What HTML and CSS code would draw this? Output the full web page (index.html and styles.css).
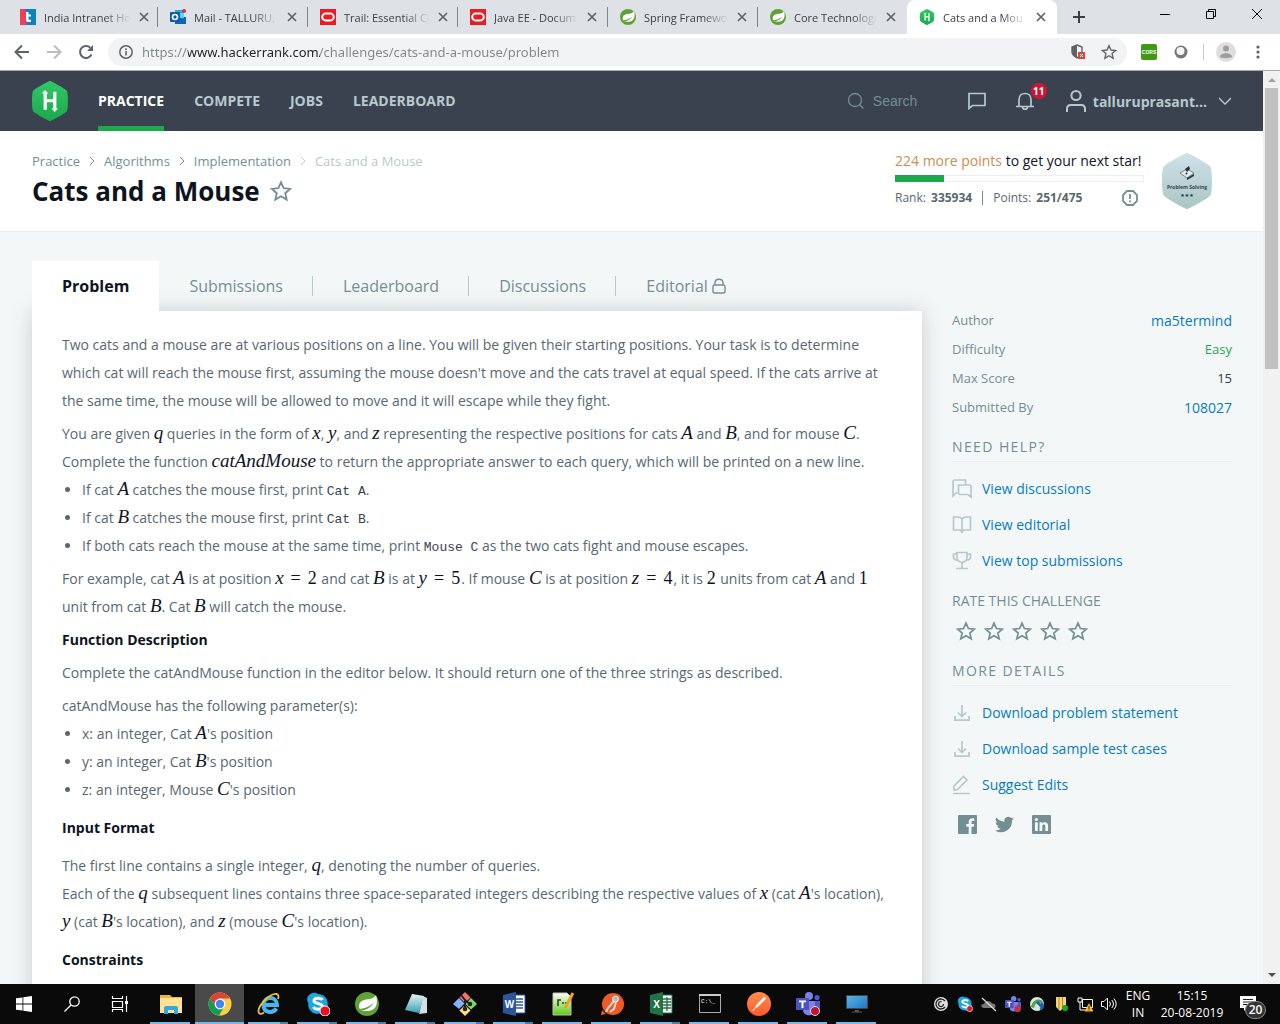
FILE: index.html
```html
<!DOCTYPE html>
<html lang="en">
<head>
<meta charset="utf-8">
<title>Cats and a Mouse | HackerRank</title>
<link rel="stylesheet" href="styles.css">
</head>
<body>
<svg class="sprites" aria-hidden="true">
  <defs>
    <linearGradient id="hexGreen" x1="0" y1="0" x2="0" y2="1"><stop offset="0" stop-color="#32c766"/><stop offset="1" stop-color="#1ba94c"/></linearGradient>
    <linearGradient id="badgeFill" x1="0" y1="0" x2="0" y2="1"><stop offset="0" stop-color="#cfe1ea"/><stop offset="1" stop-color="#a9c6c4"/></linearGradient>
    <linearGradient id="postmanFill" x1="0" y1="0" x2="0" y2="1"><stop offset="0" stop-color="#ff8d4e"/><stop offset="1" stop-color="#ff5a2b"/></linearGradient>
    <linearGradient id="screenFill" x1="0" y1="0" x2="1" y2="1"><stop offset="0" stop-color="#5db4ea"/><stop offset="1" stop-color="#1f78bd"/></linearGradient>
    <linearGradient id="noteFill" x1="0" y1="0" x2="0" y2="1"><stop offset="0" stop-color="#e6f3f5"/><stop offset="1" stop-color="#3c9fb4"/></linearGradient>
    <linearGradient id="nppFill" x1="0" y1="0" x2="0" y2="1"><stop offset="0" stop-color="#fdfff4"/><stop offset="1" stop-color="#5ecb12"/></linearGradient>
    <symbol id="close" viewBox="0 0 10 10"><path d="M1 1l8 8M9 1l-8 8" fill="none" stroke="#5f6368" stroke-width="1.7"/></symbol>
    <symbol id="oracle" viewBox="0 0 16 16"><path fill="#ea1b22" d="M0 0h16v16H0z"/><rect x="2.200" y="4.600" width="11.600" height="6.800" rx="3.400" fill="none" stroke="#fff" stroke-width="2"/></symbol>
    <symbol id="spring" viewBox="0 0 24 24"><circle cx="12" cy="12" r="12" fill="#5fa134"/><path fill="#fff" d="M21 3c1.800 7 1 12-3 14.500-4 2.400-8.500 1.300-12.500 1.300 6-.6 10.500-3.200 13-8C15 14.500 10.500 16.400 4.700 17 2.700 12 5.500 8.500 11 7.600 15.500 7 19 6.500 21 3z"/></symbol>
    <symbol id="hr" viewBox="0 0 36 40"><path fill="url(#hexGreen)" d="M18 0c1.500 0 15.500 8 16.700 9.500 1.600 2 1.600 19 0 21C33.500 32 19.500 40 18 40S2.500 32 1.300 30.500c-1.700-2-1.700-19 0-21C2.500 8 16.500 0 18 0z"/><path fill="#fff" d="M13 9l3.400 3.600h-1.600v5.600h6.400v-7.500h3.200v16.800H26L22.800 31l-3.400-3.500h1.800v-6.300h-6.400v7.500h-3.200V12.600H9.700z"/></symbol>
    <symbol id="star" viewBox="0 0 24 24"><path fill="none" stroke="currentColor" stroke-width="2" d="M12 2.500l2.900 6.500 7.100.7-5.400 4.700 1.600 7-6.200-3.700-6.200 3.700 1.600-7L2 9.700 9.100 9z"/></symbol>
    <symbol id="download" viewBox="0 0 20 20"><path fill="none" stroke="currentColor" stroke-width="1.700" d="M10 2v11M6 9.500l4 4 4-4M3 13v4.200h14V13"/></symbol>
    <symbol id="skype" viewBox="0 0 24 24"><path fill="#1ba7e6" d="M7 1c2-.4 3.500.2 5 1 6 0 10.500 5 9.500 10.500C24 17 20 23.500 14 21.600 7 22.500 1.500 18 2.400 11.500-.5 7 2 2 7 1z"/><path fill="none" stroke="#fff" stroke-width="3" d="M16.500 8C15 5.500 8 5.400 8 8.800c0 3.700 8.500 2 8.500 5.800 0 3.500-7.500 3.300-9 .2"/></symbol>
    <symbol id="teams" viewBox="0 0 24 24"><circle cx="13" cy="4" r="4" fill="#7b83eb"/><circle cx="21" cy="5.500" r="2.600" fill="#5059c9"/><path fill="#5059c9" d="M16 9h8v8c0 3-4 4.500-8 2z"/><path fill="#7b83eb" d="M7 9h12v9c0 7-12 7-12 0z"/><rect y="6" width="13" height="12" rx="1" fill="#4b53bc"/><path fill="#fff" d="M3 8.500h7v1.800H7.500V16h-2v-5.700H3z"/></symbol>
  </defs>
</svg>

<header class="browser">
  <nav class="tabstrip" aria-label="Browser tabs">
    <div class="tab"><svg class="fav" viewBox="0 0 16 16"><path fill="#ef3e5b" d="M0 0h8v16H0z"/><path fill="#0d83bd" d="M5 0h11v16H6l2-8z"/><path fill="#fff" d="M6 3h2.500v2.500H11v2H8.500V10c0 1 1 1 2.500.7v2c-3 .9-5 .2-5-2.200z"/></svg><span class="tab-title">India Intranet Ho</span><button class="tab-close" aria-label="Close tab"><svg><use href="#close"/></svg></button></div>
    <div class="tab"><svg class="fav" viewBox="0 0 16 16"><path fill="#28a8ea" d="M5 1h9v9H5z"/><path fill="#1066b5" d="M5 8l11 0v7H5z"/><path fill="#50d9ff" d="M9 4h5v5H9z"/><rect y="3" width="10" height="10" rx="1" fill="#0a5caa"/><circle cx="5" cy="8" r="2.500" fill="none" stroke="#fff" stroke-width="1.600"/><circle cx="14" cy="2" r="2" fill="#e52b3c"/></svg><span class="tab-title">Mail - TALLURU,</span><button class="tab-close" aria-label="Close tab"><svg><use href="#close"/></svg></button></div>
    <div class="tab"><svg class="fav"><use href="#oracle"/></svg><span class="tab-title">Trail: Essential Cl</span><button class="tab-close" aria-label="Close tab"><svg><use href="#close"/></svg></button></div>
    <div class="tab"><svg class="fav"><use href="#oracle"/></svg><span class="tab-title">Java EE - Docum</span><button class="tab-close" aria-label="Close tab"><svg><use href="#close"/></svg></button></div>
    <div class="tab"><svg class="fav"><use href="#spring"/></svg><span class="tab-title">Spring Framewo</span><button class="tab-close" aria-label="Close tab"><svg><use href="#close"/></svg></button></div>
    <div class="tab last"><svg class="fav"><use href="#spring"/></svg><span class="tab-title">Core Technologi</span><button class="tab-close" aria-label="Close tab"><svg><use href="#close"/></svg></button></div>
    <div class="tab active"><svg class="fav"><use href="#hr"/></svg><span class="tab-title">Cats and a Mou</span><button class="tab-close" aria-label="Close tab"><svg><use href="#close"/></svg></button></div>
    <button class="new-tab" aria-label="New tab"><svg width="12" height="12" viewBox="0 0 12 12"><path d="M6 0v12M0 6h12" stroke="#3c4043" stroke-width="2"/></svg></button>
    <div class="window-controls">
      <button aria-label="Minimize"><svg width="10" height="10" viewBox="0 0 10 10"><path d="M0 5.500h10" stroke="#000"/></svg></button>
      <button aria-label="Restore"><svg width="10" height="10" viewBox="0 0 10 10"><path d="M.5 2.500h7v7h-7zM2.500 2V.5h7v7H8" fill="none" stroke="#000"/></svg></button>
      <button aria-label="Close window"><svg width="10" height="10" viewBox="0 0 10 10"><path d="M0 0l10 10M10 0L0 10" stroke="#000"/></svg></button>
    </div>
  </nav>
  <div class="toolbar">
    <button class="nav-btn" aria-label="Back"><svg width="16" height="16" viewBox="0 0 16 16"><path d="M15 8H2M8 1.500L1.500 8 8 14.500" fill="none" stroke="#5f6368" stroke-width="2"/></svg></button>
    <button class="nav-btn" aria-label="Forward"><svg width="16" height="16" viewBox="0 0 16 16"><path d="M1 8h13M8 1.500L14.500 8 8 14.500" fill="none" stroke="#babcbe" stroke-width="2"/></svg></button>
    <button class="nav-btn" aria-label="Reload"><svg width="16" height="16" viewBox="0 0 16 16"><path d="M13.500 10.500A6 6 0 1 1 12.300 3.700" fill="none" stroke="#5f6368" stroke-width="2"/><path fill="#5f6368" d="M15 1v6H9z"/></svg></button>
    <div class="omnibox">
      <svg width="14" height="14" viewBox="0 0 14 14"><circle cx="7" cy="7" r="6.200" fill="none" stroke="#5f6368" stroke-width="1.500"/><path d="M7 6v4.500M7 3.300v1.600" stroke="#5f6368" stroke-width="1.500"/></svg>
      <input class="url" type="text" aria-label="Address" value="https://www.hackerrank.com/challenges/cats-and-a-mouse/problem">
      <button class="omni-btn" aria-label="Site permissions"><svg width="14" height="16" viewBox="0 0 14 16"><path fill="none" stroke="#5f6368" stroke-width="1.400" d="M6 1l5 2v5c0 3-2 4-5 6-3-2-5-3-5-6V3z"/><path fill="#5f6368" d="M6 1v13C3 12 1 11 1 8V3z"/><path fill="#db4437" d="M7 8h7v7H7z"/><path d="M9 10l3 3m0-3l-3 3" stroke="#fff"/></svg></button>
      <button class="omni-btn" aria-label="Bookmark"><svg class="star-16"><use href="#star"/></svg></button>
    </div>
    <div class="extensions">
      <button aria-label="CORS"><svg width="16" height="16" viewBox="0 0 16 16"><rect width="16" height="16" rx="2" fill="#3f9a12"/><text x="8" y="10" class="cors">CORS</text></svg></button>
      <button aria-label="Extension"><svg width="14" height="14" viewBox="0 0 14 14"><circle cx="7" cy="7" r="6.500" fill="#777"/><circle cx="6.500" cy="6" r="4" fill="#f4f4f4"/></svg></button>
      <span class="ext-divider"></span>
      <button aria-label="Profile"><svg width="20" height="20" viewBox="0 0 20 20"><circle cx="10" cy="10" r="10" fill="#dedede"/><circle cx="10" cy="6.500" r="3" fill="#9e9e9e"/><path fill="#9e9e9e" d="M4 15c0-5 12-5 12 0-1.500 1.500-10.500 1.500-12 0z"/></svg></button>
      <button aria-label="Menu"><svg width="4" height="14" viewBox="0 0 4 14"><g fill="#5f6368"><circle cx="2" cy="2" r="1.600"/><circle cx="2" cy="7" r="1.600"/><circle cx="2" cy="12" r="1.600"/></g></svg></button>
    </div>
  </div>
</header>

<div class="viewport">
<div class="page">
  <header class="topnav">
    <a class="logo" href="#" aria-label="HackerRank"><svg width="36" height="40"><use href="#hr"/></svg></a>
    <nav class="mainmenu">
      <a class="current" href="#">PRACTICE</a>
      <a href="#">COMPETE</a>
      <a href="#">JOBS</a>
      <a href="#">LEADERBOARD</a>
    </nav>
    <div class="search">
      <svg width="18" height="18" viewBox="0 0 18 18"><circle cx="8" cy="8" r="6.500" fill="none" stroke="#738f93" stroke-width="1.300"/><path d="M12.700 12.700L16.500 16.500" stroke="#738f93" stroke-width="1.300"/></svg>
      <input type="text" placeholder="Search" aria-label="Search">
    </div>
    <button class="icon-btn" aria-label="Messages"><svg width="20" height="20" viewBox="0 0 20 20"><path d="M2 2.500h16v12H5.500L2 17.500z" fill="none" stroke="#b7c9cc" stroke-width="1.700"/></svg></button>
    <button class="icon-btn" aria-label="Notifications"><svg width="20" height="20" viewBox="0 0 20 20"><path d="M1 15.500h18M4 15V8.500c0-8 12-8 12 0V15M7.500 16c.5 3 4.500 3 5 0" fill="none" stroke="#b7c9cc" stroke-width="1.700"/></svg><span class="count">11</span></button>
    <button class="user"><svg width="22" height="24" viewBox="0 0 22 24"><circle cx="11" cy="6.500" r="4.600" fill="none" stroke="#b7c9cc" stroke-width="2"/><path d="M2 23v-3c0-2.500 1.500-4 4-4h10c2.500 0 4 1.500 4 4v3" fill="none" stroke="#b7c9cc" stroke-width="2"/></svg><span>talluruprasant...</span><svg width="12" height="8" viewBox="0 0 12 8"><path d="M0 1l6 6 6-6" fill="none" stroke="#b7c9cc" stroke-width="1.300"/></svg></button>
  </header>

  <section class="titlebar">
    <div class="heading">
      <nav class="crumbs" aria-label="Breadcrumb">
        <a href="#">Practice</a><svg width="6" height="10" viewBox="0 0 6 10"><path d="M1 1l4 4-4 4" fill="none" stroke="#738f93"/></svg>
        <a href="#">Algorithms</a><svg width="6" height="10" viewBox="0 0 6 10"><path d="M1 1l4 4-4 4" fill="none" stroke="#738f93"/></svg>
        <a href="#">Implementation</a><svg width="6" height="10" viewBox="0 0 6 10"><path d="M1 1l4 4-4 4" fill="none" stroke="#c2d0d2"/></svg>
        <span>Cats and a Mouse</span>
      </nav>
      <div class="title-row"><h1>Cats and a Mouse</h1><button class="fav-star" aria-label="Bookmark challenge"><svg width="22" height="22"><use href="#star"/></svg></button></div>
    </div>
    <div class="progress">
      <p class="next"><span>224 more points</span> to get your next star!</p>
      <div class="bar"><div class="fill" style="width:20%"></div></div>
      <div class="rank"><span>Rank: <b>335934</b></span><i></i><span>Points: <b>251/475</b></span><svg width="16" height="16" viewBox="0 0 16 16"><path d="M5 1h6l4 4v6l-4 4H5l-4-4V5z" fill="none" stroke="#738f93" stroke-width="1.800"/><path d="M8 4v5M8 10.500v1.700" stroke="#738f93" stroke-width="1.800"/></svg></div>
    </div>
    <svg class="badge" width="50" height="56" viewBox="0 0 50 56"><path fill="url(#badgeFill)" d="M25 0c2 0 21.500 11 23.300 13.500 2.200 3 2.200 26 0 29C46.500 45 27 56 25 56S3.500 45 1.700 42.500c-2.300-3-2.300-26 0-29C3.500 11 23 0 25 0z"/><path fill="#e3eced" stroke="#39424e" stroke-width=".6" d="M18 20l7-4 7 4-7 5z"/><path fill="#2a333d" d="M25 25l7-4v2l-7 4zM23 16l4-3 1 3-3 3z"/><circle cx="24.500" cy="20.500" r="1" fill="#2a333d"/><text x="25" y="36" class="badge-text">Problem Solving</text><text x="25" y="44" class="badge-stars">★★★</text></svg>
  </section>

  <main class="content">
    <div class="challenge">
      <nav class="subtabs">
        <a class="on" href="#">Problem</a>
        <a href="#">Submissions</a>
        <a href="#">Leaderboard</a>
        <a href="#">Discussions</a>
        <a href="#">Editorial <svg width="14" height="16" viewBox="0 0 14 16"><rect x="1" y="7" width="12" height="8" rx="1.500" fill="none" stroke="#738f93" stroke-width="1.400"/><path d="M3 7V5c0-5 8-5 8 0v2" fill="none" stroke="#738f93" stroke-width="1.400"/></svg></a>
      </nav>
      <article class="statement">
        <p>Two cats and a mouse are at various positions on a line. You will be given their starting positions. Your task is to determine which cat will reach the mouse first, assuming the mouse doesn't move and the cats travel at equal speed. If the cats arrive at the same time, the mouse will be allowed to move and it will escape while they fight.</p>
        <p>You are given <var>q</var> queries in the form of <var>x</var>, <var>y</var>, and <var>z</var> representing the respective positions for cats <var>A</var> and <var>B</var>, and for mouse <var>C</var>. Complete the function <var>catAndMouse</var> to return the appropriate answer to each query, which will be printed on a new line.</p>
        <ul>
          <li>If cat <var>A</var> catches the mouse first, print <code>Cat A</code>.</li>
          <li>If cat <var>B</var> catches the mouse first, print <code>Cat B</code>.</li>
          <li>If both cats reach the mouse at the same time, print <code>Mouse C</code> as the two cats fight and mouse escapes.</li>
        </ul>
        <p>For example, cat <var>A</var> is at position <span class="eq"><var>x</var><i>=</i>2</span> and cat <var>B</var> is at <span class="eq"><var>y</var><i>=</i>5</span>. If mouse <var>C</var> is at position <span class="eq"><var>z</var><i>=</i>4</span>, it is <span class="eq">2</span> units from cat <var>A</var> and <span class="eq">1</span> unit from cat <var>B</var>. Cat <var>B</var> will catch the mouse.</p>
        <h2>Function Description</h2>
        <p>Complete the catAndMouse function in the editor below. It should return one of the three strings as described.</p>
        <p>catAndMouse has the following parameter(s):</p>
        <ul>
          <li>x: an integer, Cat <var>A</var>'s position</li>
          <li>y: an integer, Cat <var>B</var>'s position</li>
          <li>z: an integer, Mouse <var>C</var>'s position</li>
        </ul>
        <h2 class="spaced">Input Format</h2>
        <p>The first line contains a single integer, <var>q</var>, denoting the number of queries.<br>Each of the <var>q</var> subsequent lines contains three space-separated integers describing the respective values of <var>x</var> (cat <var>A</var>'s location), <var>y</var> (cat <var>B</var>'s location), and <var>z</var> (mouse <var>C</var>'s location).</p>
        <h2 class="spaced">Constraints</h2>
      </article>
    </div>

    <aside class="side">
      <dl class="facts">
        <dt>Author</dt><dd><a href="#">ma5termind</a></dd>
        <dt>Difficulty</dt><dd class="small easy">Easy</dd>
        <dt>Max Score</dt><dd class="small">15</dd>
        <dt>Submitted By</dt><dd><a href="#">108027</a></dd>
      </dl>
      <h3 class="ruled">NEED HELP?</h3>
      <ul class="links">
        <li><a href="#"><svg viewBox="0 0 20 20"><path d="M5.500 14H4l-3 3V2.500C1 1.500 1.500 1 2.500 1h11v4.500M6.500 6H18c.6 0 1 .4 1 1v11l-3-2.500H8c-.9 0-1.500-.6-1.500-1.500z" fill="none" stroke="currentColor" stroke-width="1.700"/></svg>View discussions</a></li>
        <li><a href="#"><svg viewBox="0 0 20 20"><path d="M10 18V4c-1-1.300-2-2-4-2H1.500v13H7c1.500 0 3 1 3 3 0-2 1.500-3 3-3h5.500V2H14c-2 0-3 .7-4 2" fill="none" stroke="currentColor" stroke-width="1.700"/></svg>View editorial</a></li>
        <li><a href="#"><svg viewBox="0 0 20 20"><path d="M5 1.500h10V6c0 7-10 7-10 0zM5 3H1.500v3c0 2 1.500 3 4 3.200M15 3h3.500v3c0 2-1.500 3-4 3.200M10 11.500V17M4 17.500h12" fill="none" stroke="currentColor" stroke-width="1.700"/></svg>View top submissions</a></li>
      </ul>
      <h3>RATE THIS CHALLENGE</h3>
      <div class="rating">
        <button aria-label="1 star"><svg><use href="#star"/></svg></button>
        <button aria-label="2 stars"><svg><use href="#star"/></svg></button>
        <button aria-label="3 stars"><svg><use href="#star"/></svg></button>
        <button aria-label="4 stars"><svg><use href="#star"/></svg></button>
        <button aria-label="5 stars"><svg><use href="#star"/></svg></button>
      </div>
      <h3 class="ruled">MORE DETAILS</h3>
      <ul class="links">
        <li><a href="#"><svg><use href="#download"/></svg>Download problem statement</a></li>
        <li><a href="#"><svg><use href="#download"/></svg>Download sample test cases</a></li>
        <li><a href="#"><svg viewBox="0 0 20 20"><path d="M2 15v-4L11.500 1.500l3.500 3.500L5.500 14.500zM1 18.500h17" fill="none" stroke="currentColor" stroke-width="1.700"/></svg>Suggest Edits</a></li>
      </ul>
      <div class="social">
        <a href="#" aria-label="Facebook"><svg width="19" height="19" viewBox="0 0 19 19"><path fill="#738f93" fill-rule="evenodd" d="M1 0h17q1 0 1 1v17q0 1-1 1h-4.500v-7.200h2.300l.4-2.800h-2.700V7.300c0-.8.3-1.300 1.300-1.300h1.500V3.400c-3.500-.5-5.600.5-5.600 3.600v2H8.300v2.800h2.400V19H1q-1 0-1-1V1q0-1 1-1z"/></svg></a>
        <a href="#" aria-label="Twitter"><svg width="19" height="19" viewBox="0 0 24 24"><path fill="#738f93" d="M24 4.600a10 10 0 0 1-2.800.8 5 5 0 0 0 2.200-2.700 10 10 0 0 1-3.100 1.200 4.900 4.900 0 0 0-8.400 4.500A14 14 0 0 1 1.700 3.200a4.900 4.900 0 0 0 1.500 6.500 5 5 0 0 1-2.200-.6 4.900 4.900 0 0 0 3.900 4.900 5 5 0 0 1-2.200.1 4.900 4.900 0 0 0 4.600 3.400A10 10 0 0 1 0 19.500 14 14 0 0 0 21.500 7.100 10 10 0 0 0 24 4.600z"/></svg></a>
        <a href="#" aria-label="LinkedIn"><svg width="19" height="19" viewBox="0 0 19 19"><rect width="19" height="19" rx="1" fill="#738f93"/><path fill="#f3f7f7" d="M3 7.300h2.800V16H3zM7.500 7.300h2.600v1.200c1.600-2.300 6-1.800 6 2.200V16h-2.800v-4.700c0-2.400-3-2.300-3 0V16H7.500z"/><circle cx="4.400" cy="4.500" r="1.600" fill="#f3f7f7"/></svg></a>
      </div>
    </aside>
  </main>
</div>
<div class="scrollbar">
  <svg width="8" height="4" viewBox="0 0 8 4"><path fill="#a3a3a3" d="M0 4l4-4 4 4z"/></svg>
  <div class="track"><div class="thumb"></div></div>
  <svg width="8" height="4" viewBox="0 0 8 4"><path fill="#505050" d="M0 0l4 4 4-4z"/></svg>
</div>
</div>

<footer class="taskbar">
  <div class="system">
    <button aria-label="Start"><svg width="16" height="16" viewBox="0 0 16 16"><path fill="#fff" d="M0 2.300l6.500-.9v6.200H0zM7.300 1.300L16 0v7.600H7.300zM0 8.400h6.500v6.200L0 13.700zM7.300 8.400H16V16l-8.700-1.300z"/></svg></button>
    <button aria-label="Search"><svg width="16" height="16" viewBox="0 0 16 16"><circle cx="10.500" cy="5.500" r="4.700" fill="none" stroke="#fff" stroke-width="1.300"/><path d="M7 9L.5 15.500" stroke="#fff" stroke-width="1.300"/></svg></button>
    <button aria-label="Task View"><svg width="18" height="16" viewBox="0 0 18 16"><path d="M1.500 0v2.500h10V0M1.500 5.500h10v6h-10zM1.500 16v-2.500h10V16M15.500 0v16" fill="none" stroke="#fff" stroke-width="1.200"/><path fill="#fff" d="M14 5h3v3h-3z"/></svg></button>
  </div>
  <div class="apps">
    <button class="running" aria-label="File Explorer"><svg viewBox="0 0 24 24"><path fill="#e8b53f" d="M1 3h10l2 2h10v6H1z"/><path fill="#ffe392" d="M1 6h22v15H1z"/><path fill="#35a7e0" d="M5 22v-6q0-2 2-2h10q2 0 2 2v6h-4v-4H9v4z"/></svg></button>
    <button class="running focused" aria-label="Chrome"><svg viewBox="0 0 24 24"><circle cx="12" cy="12" r="11.500" fill="#ffcd46"/><path fill="#db4437" d="M2 6.200A11.500 11.500 0 0 1 22 6.500H12L7 15z"/><path fill="#0f9d58" d="M2 6.200A11.500 11.500 0 0 0 11 23.500l5.500-9.300L7.500 15z"/><circle cx="12" cy="12" r="5.400" fill="#fff"/><circle cx="12" cy="12" r="4.200" fill="#4285f4"/></svg></button>
    <button class="running stacked" aria-label="Internet Explorer"><svg viewBox="0 0 24 24"><path fill="none" stroke="#45b6ee" stroke-width="4" d="M6 13h14c0-9-13-9.500-13.500 0 0 8 9 9 13 3.500"/><path fill="none" stroke="#f4c12c" stroke-width="1.800" d="M21 7c2-6-3-6.500-9-2.500C4 10 0 18 2 21c1 1.500 3 1 5-.5"/></svg></button>
    <button class="running stacked" aria-label="Skype"><svg viewBox="0 0 24 24"><use href="#skype"/><circle cx="19" cy="19" r="5" fill="#e81123" stroke="#eee"/></svg></button>
    <button class="running stacked" aria-label="Spring Tool Suite"><svg viewBox="0 0 24 24"><use href="#spring"/></svg></button>
    <button class="running stacked" aria-label="Notepad"><svg viewBox="0 0 24 24"><path fill="#d5dde0" d="M19 4l4 2v15l-8 1z"/><path fill="url(#noteFill)" d="M8 2l12 2-5 17-14-3z"/></svg></button>
    <button class="running stacked" aria-label="Git"><svg viewBox="0 0 24 24"><path fill="#f37074" d="M12 0l5.500 5.500L12 11 6.500 5.500z"/><path fill="#80b3ff" d="M6 6l5.500 5.500L6 17 0 12z"/><path fill="#7fd86a" d="M18 6l6 6-6 5.500-5.500-5.500z"/><path fill="#ffe07f" d="M12 13l5.500 5.500L12 24l-5.500-5.500z"/><path d="M8 3l4 5v10M12 8l5 4" fill="none" stroke="#222" stroke-width="2"/><circle cx="12" cy="17" r="2.300" fill="#222"/><circle cx="17" cy="12" r="2.300" fill="#222"/></svg></button>
    <button class="running stacked" aria-label="Word"><svg viewBox="0 0 24 24"><path fill="#fff" stroke="#2b579a" d="M12 3h11v18H12z"/><path d="M14 7h7M14 10h7M14 13h7M14 16h7" stroke="#2b579a" stroke-width="1.400"/><path fill="#2b579a" d="M1 3l13-3v24L1 21z"/><text x="7.500" y="16" class="app-letter">W</text></svg></button>
    <button class="running" aria-label="Notepad++"><svg viewBox="0 0 24 24"><path fill="url(#nppFill)" stroke="#bbb" d="M2 1h14l4 4v18H2z"/><path d="M10 8H7v6M11 11h2M14 11h2" stroke="#333" stroke-width="1.500" fill="none"/><path d="M22 1l-8 15" stroke="#e9a520" stroke-width="3"/></svg></button>
    <button class="running" aria-label="Postman Interceptor"><svg viewBox="0 0 24 24"><circle cx="13" cy="12" r="11" fill="#f15a24"/><path fill="#f15a24" d="M1 23l1-5 4 4z"/><path d="M14 9l-6 7-2 4M16 10l-2 7-4 3" stroke="#ddd" stroke-width="2" fill="none"/><circle cx="15.500" cy="7" r="3" fill="#bbb" stroke="#eee"/></svg></button>
    <button class="running stacked" aria-label="Excel"><svg viewBox="0 0 24 24"><path fill="#fff" stroke="#217346" d="M12 3h11v18H12z"/><path d="M14 7h8M14 10h8M14 13h8M14 16h8M18 5v14" stroke="#217346" stroke-width="1.400"/><path fill="#217346" d="M1 3l13-3v24L1 21z"/><text x="7.500" y="16" class="app-letter">X</text></svg></button>
    <button class="running" aria-label="Command Prompt"><svg viewBox="0 0 24 24"><path fill="#080808" stroke="#aaa" d="M1.500 2.500h21v18h-21z"/><path fill="#ccc" d="M1 2h22v2H1z"/><text x="3" y="11" class="prompt">C:\_</text></svg></button>
    <button class="running" aria-label="Postman"><svg viewBox="0 0 24 24"><circle cx="12" cy="12" r="12" fill="url(#postmanFill)"/><path d="M17.500 6.500L10 14" stroke="#fff" stroke-width="2.600" stroke-linecap="round"/><path d="M12 12l-6.500 7" stroke="#fff"/></svg></button>
    <button class="running" aria-label="Teams"><svg viewBox="0 0 24 24"><use href="#teams"/><circle cx="19" cy="19" r="4.500" fill="#c4122f" stroke="#ddd"/></svg></button>
    <button class="running" aria-label="Remote Desktop"><svg viewBox="0 0 24 24"><path fill="url(#screenFill)" stroke="#444" d="M1.500 3.500h21v13h-21z"/><path fill="#555" d="M10 18h4v1.500h-4zM7 19.500h10v1H7z"/></svg></button>
  </div>
  <div class="tray">
    <svg viewBox="0 0 16 16"><circle cx="8" cy="8" r="7" fill="#ddd"/><path d="M12 5a5 5 0 1 0 0 6M10.500 8a2.500 2.500 0 1 1-2-2.400" fill="none" stroke="#222" stroke-width="1.300"/></svg>
    <svg viewBox="0 0 24 24"><use href="#skype"/><circle cx="19" cy="19" r="4.500" fill="#e81123" stroke="#eee"/></svg>
    <svg viewBox="0 0 16 16"><path fill="#777" d="M3 12C-1 12 0 7.500 3 8c1-4 7-4 8-.5 4-.5 5 4.500 1.500 4.500z"/><path d="M1 2l14 13" stroke="#ddd" stroke-width="1.300"/></svg>
    <svg viewBox="0 0 24 24"><use href="#teams"/><circle cx="19" cy="19" r="5" fill="#c4314b"/></svg>
    <svg viewBox="0 0 16 16"><circle cx="8" cy="8" r="7" fill="#d9e8dc"/><path d="M2 11C4 2 12 2 14 6l-3 1c-2-2-5 0-6 5z" fill="#4c9e54"/><path d="M8 6l5 5M12 7c3 2 2 5-1 6" stroke="#1e62a8" stroke-width="2.500" fill="none"/></svg>
    <svg viewBox="0 0 16 16"><path fill="#f3d47a" d="M3 1h10v9l-6 5-4-4z"/><path d="M6 1v12M9.500 1v11" stroke="#b88b22"/><circle cx="12" cy="12" r="3" fill="#22a528"/></svg>
    <svg viewBox="0 0 16 16"><path d="M1 2h4v4H1zM5.500 3.500h10v8h-10zM3 6v8h6" fill="none" stroke="#fff"/><path fill="#fdb813" d="M12 7l4.500 8.500h-9z"/><path d="M12 10v3M12 13.500v1" stroke="#222"/></svg>
    <svg viewBox="0 0 16 16"><path d="M.5 5.500H3L6.500 2v12L3 10.500H.5zM8.500 5.500q2 2.500 0 5M10.800 4q3.300 4 0 8M13 2.500q4.400 5.500 0 11" fill="none" stroke="#fff"/></svg>
  </div>
  <button class="lang"><span>ENG</span><span>IN</span></button>
  <button class="clock"><span>15:15</span><span>20-08-2019</span></button>
  <button class="notify" aria-label="Notifications"><svg width="16" height="16" viewBox="0 0 16 16"><path fill="#fff" d="M0 0h16v12H7l-3 3v-3H0z"/><path d="M3 3.500h10M3 6h10M3 8.500h7" stroke="#222"/></svg><span class="notify-count">20</span></button>
</footer>
</body>
</html>
```
FILE: styles.css
```css
* { box-sizing: border-box; }

body {
  margin: 0;
  height: 100vh;
  display: flex;
  flex-direction: column;
  overflow: hidden;
  font-family: "Open Sans", "Noto Sans", sans-serif;
  font-size: 14px;
  color: #39424e;
}

button {
  display: flex;
  align-items: center;
  justify-content: center;
  padding: 0;
  border: 0;
  background: none;
  font: inherit;
  color: inherit;
}

input { border: 0; padding: 0; background: none; outline: 0; }
a { color: #097bbf; text-decoration: none; }
p, h1, h2, h3, ul, dl, dd { margin: 0; padding: 0; }
svg { display: block; flex: none; }
.sprites { position: absolute; width: 0; height: 0; }

/* Browser tabs */
.tabstrip {
  display: flex;
  height: 34px;
  padding-left: 8px;
  background: #dee1e6;
}
.tab {
  display: flex;
  align-items: center;
  width: 150px;
  padding: 0 10px 0 12px;
  gap: 8px;
  font-size: 11px;
  color: #3c4043;
  background: linear-gradient(#80868b, #80868b) right center / 1px 20px no-repeat;
}
.tab.last { background: none; width: 149px; }
.tab.active { background: #fff; border-radius: 8px 8px 0 0; }
.fav { width: 16px; height: 16px; }
.tab-title {
  flex: 1;
  white-space: nowrap;
  -webkit-mask-image: linear-gradient(to right, #000 70%, transparent);
  mask-image: linear-gradient(to right, #000 70%, transparent);
}
.tab-close { width: 12px; }
.tab-close svg { width: 10px; height: 10px; }
.new-tab { width: 44px; }
.window-controls { display: flex; margin-left: auto; height: 28px; }
.window-controls button { width: 46px; }

/* Address bar */
.toolbar {
  display: flex;
  align-items: center;
  height: 37px;
  padding-left: 6px;
  background: #fff;
  border-bottom: 1px solid #a8abae;
}
.nav-btn { width: 32px; }
.omnibox {
  display: flex;
  align-items: center;
  flex: 1;
  height: 28px;
  margin-left: 6px;
  padding: 0 8px 0 11px;
  gap: 9px;
  border-radius: 14px;
  background: #f1f3f4;
}
.url {
  flex: 1;
  min-width: 0;
  font: 13px "Noto Sans", sans-serif;
  color: #80868b;
  background: linear-gradient(to right, #80868b 46px, #202124 46px, #202124 178px, #80868b 178px);
  -webkit-background-clip: text;
  background-clip: text;
  -webkit-text-fill-color: transparent;
}
.omni-btn { width: 20px; color: #5f6368; }
.omni-btn + .omni-btn { margin-left: 2px; }
.star-16 { width: 16px; height: 16px; }
.extensions { display: flex; align-items: center; height: 28px; padding: 0 6px; }
.extensions button { width: 32px; }
.ext-divider { width: 1px; height: 16px; margin: 0 6px; background: #c6c8ca; }
.cors { font: bold 5px "Liberation Sans", sans-serif; fill: #fff; text-anchor: middle; }

/* Page area with its scroll bar */
.viewport { flex: 1; min-height: 0; display: flex; background: #f3f7f7; }
.page { flex: 1; min-width: 0; overflow: hidden; }
.scrollbar {
  display: flex;
  flex-direction: column;
  align-items: center;
  width: 17px;
  padding: 7px 0;
  background: #f1f1f1;
}
.track { flex: 1; margin: 6px 0; }
.thumb { width: 13px; height: 32%; background: #c1c1c1; }

/* Site navigation */
.topnav {
  display: flex;
  align-items: center;
  height: 60px;
  padding: 0 32px;
  background: #39424e;
}
.mainmenu { display: flex; height: 60px; margin: 0 auto 0 30px; gap: 30px; }
.mainmenu a {
  padding-top: 5px;
  border-bottom: 5px solid transparent;
  line-height: 50px;
  font-weight: 700;
  color: #b7c9cc;
}
.mainmenu .current { color: #fff; border-color: #1ba94c; }
.search { display: flex; align-items: center; gap: 8px; width: 120px; }
.search input { width: 80px; font: 14px "Liberation Sans", Arial, sans-serif; color: #738f93; }
.search input::placeholder { color: #738f93; opacity: 1; }
.icon-btn { position: relative; width: 20px; margin-right: 28px; }
.count {
  position: absolute;
  left: 16px;
  top: -8px;
  width: 16px;
  border-radius: 8px;
  background: #d11534;
  color: #fff;
  font-size: 10px;
  line-height: 16px;
  font-weight: 700;
}
.user { gap: 6px; margin-left: 2px; font-weight: 700; color: #b7c9cc; }
.user svg:last-child { margin-left: 6px; }

/* Challenge title */
.titlebar {
  display: flex;
  height: 101px;
  padding: 20px 51px 0 32px;
  background: #fff;
  border-bottom: 1px solid #e7eeef;
}
.heading { flex: 1; }
.crumbs { display: flex; align-items: center; gap: 9px; font-size: 13px; line-height: 20px; }
.crumbs a { color: #738f93; }
.crumbs span { color: #b7c9cc; }
.title-row { display: flex; align-items: center; gap: 10px; }
h1 { font-size: 26px; line-height: 40px; font-weight: 700; color: #0e141e; }
.fav-star { color: #738f93; }
.progress { width: 249px; margin-right: 18px; }
.next { line-height: 20px; color: #0e141e; }
.next span { color: #d08c50; }
.bar { height: 7px; margin-top: 4px; border: 1px solid #eceff0; }
.fill { height: 7px; margin: -1px; background: #1ba94c; }
.rank {
  display: flex;
  align-items: center;
  gap: 10px;
  padding-right: 6px;
  margin-top: 7px;
  font-size: 12px;
  line-height: 18px;
  color: #576871;
}
.rank b { margin-left: 2px; }
.rank i { width: 1px; height: 14px; background: #738f93; }
.rank svg { margin-left: auto; }
.badge { margin-top: 2px; }
.badge-text { font: bold 5px "Open Sans", sans-serif; fill: #39424e; text-anchor: middle; }
.badge-stars { font: 5px "DejaVu Sans", sans-serif; fill: #2a333d; text-anchor: middle; }

/* Problem and side column */
.content { display: flex; gap: 30px; padding: 29px 31px 0 32px; }
.challenge { flex: 1; min-width: 0; }
.subtabs { display: flex; font-size: 16px; line-height: 50px; }
.subtabs a {
  display: flex;
  align-items: center;
  gap: 4px;
  padding: 0 30px;
  color: #738f93;
  background: linear-gradient(#b7c9cc, #b7c9cc) right center / 1px 20px no-repeat;
}
.subtabs a:last-child { background: none; }
.subtabs .on { position: relative; z-index: 1; background: #fff; font-weight: 700; color: #0e141e; }
.statement {
  padding: 20px 30px 40px;
  background: #fff;
  box-shadow: 0 0 20px rgba(57, 66, 78, 0.22);
  line-height: 28px;
  color: #576871;
}
.statement p, .statement h2 { margin-bottom: 5px; }
.statement p:has(+ ul) { margin-bottom: 0; }
.statement ul { margin-bottom: 5px; padding-left: 20px; }
.statement h2 { font-size: 14px; line-height: 28px; font-weight: 700; color: #0e141e; }
.statement .spaced { margin: 10px 0; }
var, .eq { font-family: "Liberation Serif", "Times New Roman", serif; line-height: 20px; color: #0e141e; }
var { font-size: 19px; font-style: italic; }
.eq { margin-right: 1px; font-size: 18px; white-space: nowrap; }
.eq i { margin: 0 7px; font-style: normal; }
code { font: 13px/20px "Liberation Mono", monospace; color: #39424e; }

.side { width: 280px; padding-top: 45px; }
.facts { display: grid; grid-template-columns: 1fr auto; line-height: 29px; }
.facts dt { font-size: 13px; color: #738f93; }
.facts dd { text-align: right; }
.facts .small { font-size: 13px; }
.facts .easy { color: #1ba94c; }
h3 { font-size: 14px; line-height: 20px; font-weight: 400; color: #738f93; }
.side h3 { margin-top: 10px; }
.side .ruled { margin-top: 15px; padding-bottom: 4px; letter-spacing: 0.1em; border-bottom: 1px solid #e7eeef; }
.links { padding: 9px 0 2px; list-style: none; }
.links a { display: flex; align-items: center; gap: 10px; line-height: 36px; }
.links svg { width: 20px; height: 20px; color: #b7c9cc; }
.rating { display: flex; height: 40px; margin-bottom: -5px; color: #738f93; }
.rating button { width: 28px; }
.rating svg { width: 20px; height: 20px; }
.social { display: flex; gap: 18px; padding: 10px 6px; }

/* Windows task bar */
.taskbar { display: flex; height: 40px; background: #0a0a0a; color: #fff; font-size: 12px; }
.system { display: flex; margin-right: 2px; }
.system button { width: 48px; }
.apps { display: flex; flex: 1; }
.apps button {
  width: 49px;
  border: solid transparent;
  border-width: 0 4px 0 4px;
  background: linear-gradient(#76b9ed, #76b9ed) left bottom / 40px 2px no-repeat;
}
.apps .stacked { background: linear-gradient(to right, #76b9ed 32px, #4f7fa5 32px) left bottom / 40px 2px no-repeat; }
.apps .focused {
  border: 0;
  background: linear-gradient(#76b9ed, #76b9ed) left bottom / 100% 2px no-repeat, #4a4a4a;
}
.apps svg { width: 24px; height: 24px; }
.app-letter { font: bold 10px "Liberation Sans", sans-serif; fill: #fff; text-anchor: middle; }
.prompt { font: 6px "Liberation Mono", monospace; fill: #fff; }
.tray { display: flex; align-items: center; gap: 8px; margin-right: 8px; }
.tray svg { width: 16px; height: 16px; }
.lang, .clock { flex-direction: column; line-height: 17px; }
.lang { width: 26px; }
.clock { width: 82px; }
.notify { position: relative; width: 29px; margin: 0 18px 0 0; }
.notify-count {
  position: absolute;
  left: 12px;
  top: 17px;
  width: 21px;
  border: 1px solid #888;
  border-radius: 9px;
  background: #333;
  line-height: 16px;
  font-weight: 600;
}
```
